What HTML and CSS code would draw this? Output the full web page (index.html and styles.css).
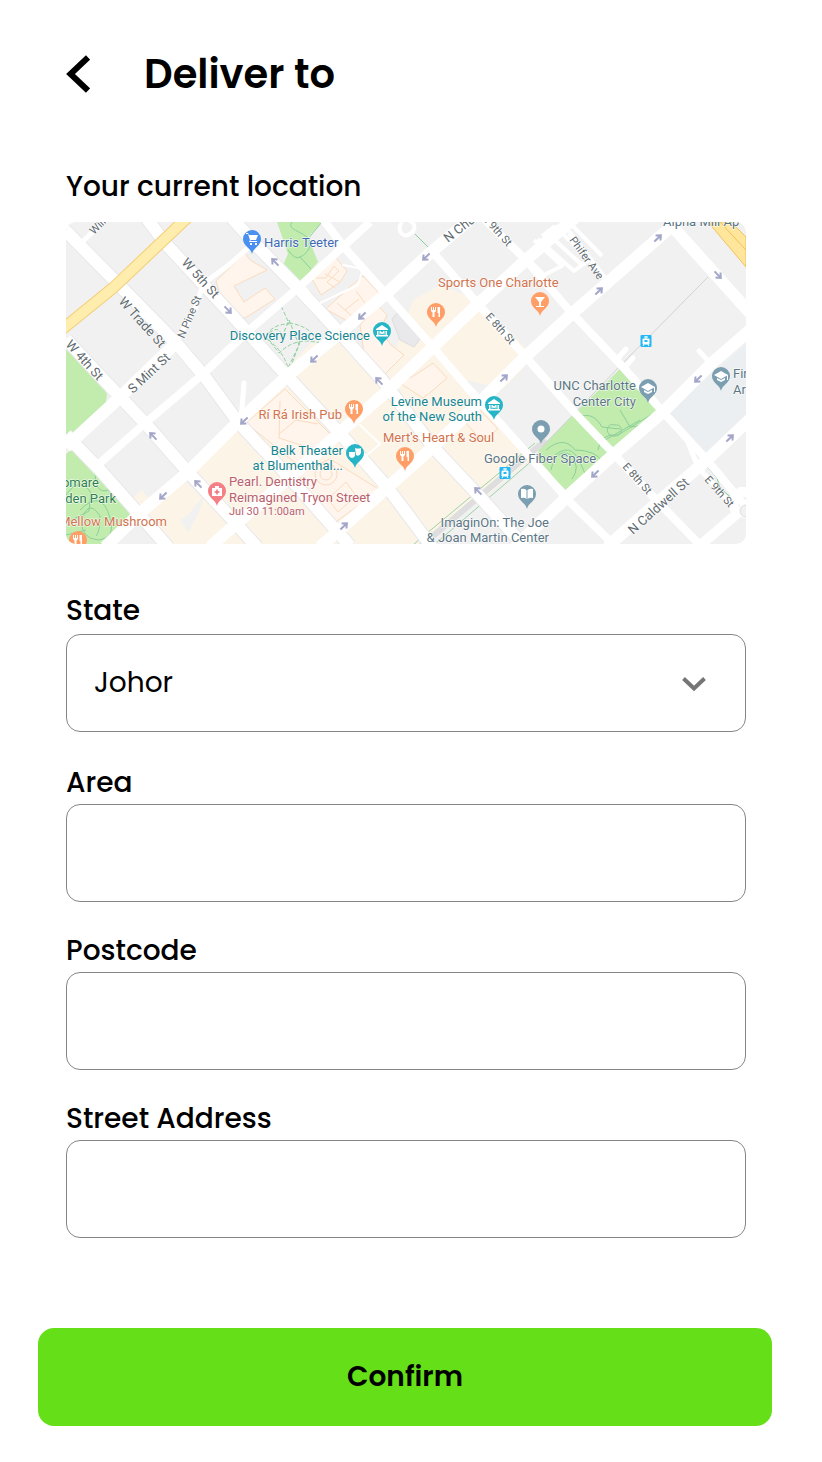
FILE: index.html
```html
<!DOCTYPE html>
<html lang="en">
<head>
<meta charset="utf-8">
<meta name="viewport" content="width=device-width, initial-scale=1">
<title>Deliver to</title>
<link rel="stylesheet" href="styles.css">
</head>
<body>
<main class="page">
  <header class="header">
    <button class="back" type="button" aria-label="Back">
      <svg width="24" height="38" viewBox="0 0 24 38" aria-hidden="true"><path d="M22 2.500 4.500 19 22 35.500" fill="none" stroke="currentColor" stroke-width="6"/></svg>
    </button>
    <h1 class="title">Deliver to</h1>
  </header>

  <section class="location">
    <h2 class="label">Your current location</h2>
    <svg class="map" viewBox="66 222 680 322" role="img" aria-label="Map of your current location">
      <defs>
        <path id="pin" d="M0 15C-1 9-9 7-9 0a9 9 0 1 1 18 0C9 7 1 9 0 15z"/>
        <path id="fork" d="M-5-5h1v3h1v-3h1v3h1v-3h1v4l-1.500 1.500V5h-2V.5L-5-1zM1.500-5H4V5H2.500V1h-1z" fill="#fff"/>
        <path id="museum" d="M-6-2 0-6l6 4v1H-6zM-5 0h1.500v4H-5zM3.500 0H5v4H3.500zM-6 4H6v1.500H-6zM-2.500 3.500V0h1L0 1.500 1.500 0h1v3.500h-1V2L0 3.500-1.500 2v1.500z" fill="#fff"/>
        <path id="cap" d="M-7-1 0-5l7 4-7 4zM-4 2v2l4 2 4-2V2L0 4zM6-1h1v5H6z" fill="#fff"/>
        <path id="arrow" d="M-5 0H3M0-3.500 4 0 0 3.500" fill="none" stroke="#a3a6c8" stroke-width="2"/>
        <g id="tram"><rect x="-5.500" y="-6" width="11" height="12" rx="1" fill="#24b8f5"/><path d="M-3-2h6v5h-6zM-2-4h4M0-5v3M-3 5l1-2M3 5 2 3" fill="#fff" stroke="#fff"/><path d="M-1.500-1h3v2h-3z" fill="#24b8f5"/></g>
      </defs>
      <rect x="66" y="222" width="680" height="322" fill="#f1f1f1"/>

      <g class="commercial">
        <path d="M413 300 440 285 478 300 528 350 522 370 503 389 466 380 500 423 533 458 425 544H172L140 514 182 478 202 498 188 515 180 520 188 532 200 510 204 497 190 470 237 424 270 385 310 344 345 338 385 380Z"/>
        <path d="M128 502 142 490 150 500 138 512Z"/>
      </g>
      <path d="M664 416 702 382 746 345V425L707 458Z" fill="#ebeff2"/>

      <g class="green">
        <path d="M66 350 82 360 100 380 107 395 105 408 66 441Z"/>
        <path d="M66 454 73 448 133 514 105 544H66Z"/>
        <path d="M277 222H322L308 237 318 262 300 283 283 265 288 254Z"/>
        <path d="M622 367 658 409 569 493 536 461 539 449Z"/>
      </g>
      <g class="paths">
        <path d="M288 250q7 10 12 7c10-4 13-16 7-20-9-7-20-8-15-15M300 257l11 12M307 240l15-18"/>
        <path d="M66 495q14-20 25-2l-2 18-23 12M95 470q0 25 13 20l25 24M80 510q22-22 30 8 6 20-12 22-18-2-16-20 6-22 18-4 0 16-4 20M66 535l20-5"/>
        <path d="M546 450q18-15 29 0 20 0 28 12M555 455q15-12 24 5l8 18M551 470q5-23 20-15 10 12 1 24M605 440l35-20M598 450q2-17 20-15l36-22M575 419q17-10 27 8l18 2M614 425c-7-3-10 10-1 11 11 1 11-13 1-11zM620 410l10 17 20-2"/>
        <path d="M281 306q5 10 8 18-17 0-24 13M289 323q22 3 30 20-22-7-40 10-9-12-14-16 14-15 17 0l7-17 10 25-11 23q-5-18-22-30M300 342l-12 32" stroke-dasharray="4 2"/>
        <path d="M415 234 430 249M707 466l10 12 3 10 15 13"/>
      </g>
      <g class="building">
        <path d="M216 281 245 253 250 260 267 270 234 286 244 302 265 288 275 299 245 318Q225 315 216 281Z"/>
        <path d="M311 277 336 258 347 271 340 282 321 295Z"/>
        <path d="M316 278h10l8-12 5 5-12 11 8 6M325 274l15 8" fill="none"/>
        <path d="M326 309 352 285 363 276 379 293 347 321Z"/>
        <path d="M337 303 354 318M356 291 365 303M345 310 359 299" fill="none"/>
        <path d="M360 325 378 306 387 315 380 331 391 345 404 355 384 375 365 360Z"/>
        <path d="M415 375 433 363 447 378 432 391 423 398 400 383Z"/>
        <path d="M246 423 285 389 330 434 298 465Z"/>
        <path d="M280 401 279 438 304 446M279 434 296 420 318 424" fill="none"/>
        <path d="M298 474 330 459 380 490 330 526Z"/>
        <circle cx="326" cy="474" r="11"/><circle cx="326" cy="474" r="6"/>
        <path d="M346 482 356 496 338 512 328 499ZM466 423 478 408 498 429 482 441Z"/>
      </g>
      <path d="M392 319 400 310 423 335 414 347 400 340Z" fill="#e9e9eb" stroke="#dddde0"/>

      <g class="rail"><path d="M546 440 420 547"/><path d="M708 277 618 368 542 447"/></g>
      <g class="rail-edge"><path d="M535 443 414 544M541 453 435 544"/></g>

      <g class="road-edge">
        <path d="M60 225 120 286 177 344 205 377 238 422 289 477 350 546"/>
        <path d="M145 216 165 243 230 313 287 376 337 430 387 487 432 547"/>
        <path d="M232 218 257 246 298 288 340 333 383 381 433 447 480 497 525 547"/>
        <path d="M66 339 103 379 145 423 188 472 230 517 257 547M66 435 100 470 138 513 168 547"/>
      </g>
      <g class="road road--wide">
        <path d="M60 225 120 286 177 344 205 377 238 422 289 477 350 546"/>
        <path d="M145 216 165 243 230 313 287 376 337 430 387 487 432 547"/>
        <path d="M232 218 257 246 298 288 340 333 383 381 433 447 480 497 525 547"/>
        <path d="M66 339 103 379 145 423 188 472 230 517 257 547"/>
        <path d="M66 435 100 470 138 513 168 547"/>
        <path d="M472 218 430 253 387 293 340 333 287 376 238 422 188 472 140 513 105 547"/>
        <path d="M578 215 527 259 478 304 432 348 385 393 337 435 290 477 237 523 210 547"/>
        <path d="M680 219 607 283 575 311 525 357 480 402 433 447 387 488 320 547"/>
        <path d="M750 330 712 363 663 412 613 455 570 494 515 547"/>
        <path d="M750 419 707 460 658 502 607 547"/>
        <path d="M672 226 750 313"/>
        <path d="M175 344 117 400 66 447"/>
      </g>
      <g class="road">
        <path d="M320 215 343 246 385 293 432 346 467 387 500 423 533 460 570 502 616 547"/>
        <path d="M430 249 478 304 525 356 575 413 613 453 658 502 702 547"/>
        <path d="M483 218 525 259 570 311 622 366 663 412 707 460 746 507"/>
        <path d="M370 222 298 288 247 332 202 375 143 425 100 463"/>
      </g>
      <g class="road road--thin">
        <path d="M257 240 230 264 203 284 195 309 174 345"/>
        <path d="M82 242 110 216M570 233 607 281M677 425 687 440 698 467 738 512M619 357 626 349M626 366 633 358M699 351 713 366M244 383 241 420"/>
        <path d="M343 265 363 269 358 285 318 304 306 288" stroke-width="2"/>
        <path d="M360 425 380 444 359 462" stroke-width="2"/>
      </g>
      <g class="lot">
        <path d="M529 260 544 275 562 266 534 240M538 239 574 271 589 260 555 226M546 232 583 266M555 226 542 236M570 223 602 256"/>
        <path d="M402 222c-6 8 1 17 8 12 8-6 4-12-2-14"/>
      </g>
      <path d="M750 492h-9c-12 8-9 20 1 20l8 3M739 512 696 549" fill="none" stroke="#fff" stroke-width="10"/>
      <circle cx="746" cy="511" r="6" fill="#f1f1f1" stroke="#ddd"/>

      <g class="highway">
        <path class="highway-edge" d="M60 331 113 288 188 217"/><path class="highway-fill" d="M60 331 113 288 188 217"/>
        <path d="M708 222H731L746 237V267Z" fill="#ffe69b" stroke="#f0c15d"/><path d="M720 222 746 250" fill="none" stroke="#f0c15d"/>
      </g>

      <g>
        <use href="#arrow" transform="translate(228 310) rotate(46)"/><use href="#arrow" transform="translate(275 262) rotate(226)"/>
        <use href="#arrow" transform="translate(362 316) rotate(136)"/><use href="#arrow" transform="translate(314 359) rotate(136)"/>
        <use href="#arrow" transform="translate(426 257) rotate(136)"/><use href="#arrow" transform="translate(504 378) rotate(-44)"/>
        <use href="#arrow" transform="translate(658 238) rotate(-44)"/><use href="#arrow" transform="translate(599 291) rotate(-44)"/>
        <use href="#arrow" transform="translate(718 275) rotate(46)"/><use href="#arrow" transform="translate(730 438) rotate(-44)"/>
        <use href="#arrow" transform="translate(153 436) rotate(226)"/><use href="#arrow" transform="translate(198 484) rotate(226)"/>
        <use href="#arrow" transform="translate(163 496) rotate(136)"/><use href="#arrow" transform="translate(244 421) rotate(136)"/>
        <use href="#arrow" transform="translate(344 526) rotate(-44)"/><use href="#arrow" transform="translate(478 491) rotate(226)"/>
        <use href="#arrow" transform="translate(595 474) rotate(136)"/><use href="#arrow" transform="translate(698 379) rotate(136)"/>
        <use href="#arrow" transform="translate(379 381) rotate(226)"/>
      </g>

      <g class="street">
        <text transform="translate(118 302) rotate(48)">W Trade St</text>
        <text transform="translate(181 263) rotate(48)">W 5th St</text>
        <text transform="translate(65 345) rotate(48)">W 4th St</text>
        <text transform="translate(133 394) rotate(-43)">S Mint St</text>
        <text transform="translate(448 243) rotate(-38)">N Church</text>
        <text transform="translate(633 535) rotate(-42)">N Caldwell St</text>
      </g>
      <g class="street street--small">
        <text transform="translate(94 235) rotate(-45)">Wilkes</text>
        <text transform="translate(184 339) rotate(-67)">N Pine St</text>
        <text transform="translate(482 219) rotate(48)">E 9th St</text>
        <text transform="translate(485 317) rotate(48)">E 8th St</text>
        <text transform="translate(569 240) rotate(54)">Phifer Ave</text>
        <text transform="translate(622 467) rotate(48)">E 8th St</text>
        <text transform="translate(704 480) rotate(48)">E 9th St</text>
      </g>

      <g class="poi poi--blue"><use href="#pin" x="252" y="239"/><text x="264" y="247">Harris Teeter</text></g>
      <path d="M246 233h2l1 2h9l-2 5h-6l1 1h6v1h-8l1-2-2-6h-2zM250 243h2v2h-2zM255 243h2v2h-2z" fill="#fff"/>
      <g class="poi poi--orange">
        <use href="#pin" x="540" y="301"/><use href="#pin" x="436" y="312"/><use href="#pin" x="354" y="409"/><use href="#pin" x="405" y="456"/><use href="#pin" x="78" y="540"/>
        <text x="438" y="287">Sports One Charlotte</text>
        <text x="342" y="419" text-anchor="end">Rí Rá Irish Pub</text>
        <text x="383" y="442">Mert's Heart &amp; Soul</text>
        <text x="167" y="526" text-anchor="end">Mellow Mushroom</text>
      </g>
      <use href="#fork" x="436" y="312"/><use href="#fork" x="354" y="409"/><use href="#fork" x="405" y="456"/><use href="#fork" x="78" y="540"/>
      <path d="M535 297h10l-4 5v4h3v1h-8v-1h3v-4z" fill="#fff"/>
      <g class="poi poi--teal">
        <use href="#pin" x="382" y="331"/><use href="#pin" x="494" y="405"/><use href="#pin" x="355" y="453"/>
        <text x="370" y="340" text-anchor="end">Discovery Place Science</text>
        <text x="482" y="406" text-anchor="end">Levine Museum</text>
        <text x="482" y="421" text-anchor="end">of the New South</text>
        <text x="343" y="455" text-anchor="end">Belk Theater</text>
        <text x="343" y="470" text-anchor="end">at Blumenthal...</text>
      </g>
      <use href="#museum" x="382" y="331"/><use href="#museum" x="494" y="405"/>
      <path d="M349 452h6v4q-3 4-6 0zM355 448q3 1 6 0v5q-2 4-5 2z" fill="#fff"/>
      <g class="poi poi--slate">
        <use href="#pin" x="648" y="388"/><use href="#pin" x="721" y="376"/><use href="#pin" x="541" y="429"/><use href="#pin" x="527" y="494"/>
        <text x="636" y="390" text-anchor="end">UNC Charlotte</text>
        <text x="636" y="406" text-anchor="end">Center City</text>
        <text x="733" y="378">Fir</text>
        <text x="733" y="394">Ar</text>
        <text x="484" y="463">Google Fiber Space</text>
        <text x="549" y="527" text-anchor="end">ImaginOn: The Joe</text>
        <text x="549" y="542" text-anchor="end">&amp; Joan Martin Center</text>
        <text x="663" y="226">Alpha Mill Ap</text>
      </g>
      <use href="#cap" x="648" y="388"/><use href="#cap" x="721" y="376"/>
      <circle cx="541" cy="429" r="3.500" fill="#fff"/>
      <path d="M521 489q3-1 5.500 1v9q-2-2-5.500-1zM527.500 490q3-2 5.500-1v9q-3-1-5.500 1z" fill="#fff"/>
      <g class="poi poi--green"><text x="99" y="487" text-anchor="end">omare</text><text x="116" y="503" text-anchor="end">den Park</text></g>
      <g class="poi poi--rose">
        <use href="#pin" x="217" y="491"/>
        <text x="229" y="486">Pearl. Dentistry</text>
        <text x="229" y="502">Reimagined Tryon Street</text>
        <text class="poi-time" x="229" y="515">Jul 30 11:00am</text>
      </g>
      <path d="M212 488h3v-2h4v2h3v8h-10z" fill="#fff"/><path d="M217 489.500v5M214.500 492h5" stroke="#ef6f7b" stroke-width="1.500"/>
      <use href="#tram" x="646" y="341"/><use href="#tram" x="505" y="473"/>
    </svg>
  </section>

  <form class="form">
    <div class="fields">
      <div class="field">
        <label class="label" for="state">State</label>
        <div class="select-wrap">
          <select class="control control--select" id="state"><option>Johor</option></select>
          <svg class="select-arrow" width="24" height="15" viewBox="0 0 24 15" aria-hidden="true"><path d="M1.500 1.500 12 11.500 22.500 1.500" fill="none" stroke="currentColor" stroke-width="4"/></svg>
        </div>
      </div>
      <div class="fields fields--text">
        <div class="field"><label class="label" for="area">Area</label><input class="control" id="area" type="text"></div>
        <div class="field"><label class="label" for="postcode">Postcode</label><input class="control" id="postcode" type="text"></div>
        <div class="field"><label class="label" for="street">Street Address</label><input class="control" id="street" type="text"></div>
      </div>
    </div>
    <button class="confirm" type="submit">Confirm</button>
  </form>
</main>
</body>
</html>
```

FILE: styles.css
```css
* { box-sizing: border-box; }

body {
  margin: 0;
  background: #fff;
  color: #000;
  font-family: Poppins, Inter, sans-serif;
}

.page { padding: 44px 50px 36px 38px; }

.header {
  display: flex;
  align-items: center;
  gap: 54px;
  height: 60px;
  padding-left: 28px;
}

.back {
  display: flex;
  padding: 0;
  border: 0;
  background: none;
  color: #000;
  cursor: pointer;
}

.title {
  margin: 0;
  font-size: 40px;
  font-weight: 600;
  line-height: 60px;
}

.location { padding: 62px 26px 0 28px; }

.label {
  display: block;
  margin: 0;
  font-size: 28px;
  font-weight: 500;
  line-height: 42px;
}

.map {
  display: block;
  width: 100%;
  height: auto;
  margin-top: 14px;
  border-radius: 10px;
  overflow: hidden;
  font-family: Roboto, sans-serif;
}

.commercial { fill: #fbf4e7; }
.green { fill: #c1ecae; }
.paths { fill: none; stroke: #8ccf9a; stroke-width: 1; }
.building { fill: #fff5ec; stroke: #fadcbf; }
.rail { fill: none; stroke: #d2d2d4; }
.rail path:first-child { stroke: #dededf; stroke-width: 6; }
.rail-edge { fill: none; stroke: #9bd3a2; }
.road-edge { fill: none; stroke: #e8e8ea; stroke-width: 14; }
.road { fill: none; stroke: #fff; stroke-width: 8; stroke-linejoin: round; }
.road--wide { stroke-width: 12; }
.road--thin { stroke-width: 5; stroke-linecap: round; }
.lot { fill: none; stroke: #fff; stroke-width: 4; stroke-linejoin: round; }
.highway { fill: none; }
.highway-edge { stroke: #f3cd75; stroke-width: 12; }
.highway-fill { stroke: #ffedae; stroke-width: 10; }

.street {
  fill: #5f6b70;
  stroke: #fff;
  stroke-width: 1;
  paint-order: stroke;
  font-size: 13px;
}
.street--small { font-size: 11px; }

.poi { font-size: 13px; }
.poi text { paint-order: stroke; stroke: #fff; stroke-width: 1; }
.poi .poi-time { font-size: 11px; }
.poi--blue { fill: #4a90f0; }
.poi--blue text { fill: #3d6bb3; }
.poi--orange { fill: #ff9e67; }
.poi--orange text { fill: #d2734d; }
.poi--teal { fill: #26b5c6; }
.poi--teal text { fill: #168590; }
.poi--slate { fill: #7b9eb0; }
.poi--slate text { fill: #5b7684; }
.poi--green text { fill: #2c7d4b; }
.poi--rose { fill: #f57f87; }
.poi--rose text { fill: #b9606b; }

.form { margin-top: 46px; }

.fields { padding: 0 26px 0 28px; }

.fields--text {
  display: flex;
  flex-direction: column;
  gap: 28px;
  margin-top: 30px;
  padding: 0;
}

.control {
  display: block;
  width: 100%;
  height: 98px;
  padding: 0 27px;
  border: 1px solid #858585;
  border-radius: 14px;
  background: #fff;
  color: #000;
  font: 400 28px/42px Poppins, Inter, sans-serif;
}

.select-wrap { position: relative; margin-top: 2px; }
.control--select { appearance: none; }

.select-arrow {
  position: absolute;
  top: 43px;
  right: 40px;
  color: #757575;
  pointer-events: none;
}

.confirm {
  display: block;
  width: 100%;
  height: 98px;
  margin-top: 90px;
  border: 0;
  border-radius: 16px;
  background: #65df18;
  color: #000;
  font: 600 28px/42px Poppins, Inter, sans-serif;
  cursor: pointer;
}
```
